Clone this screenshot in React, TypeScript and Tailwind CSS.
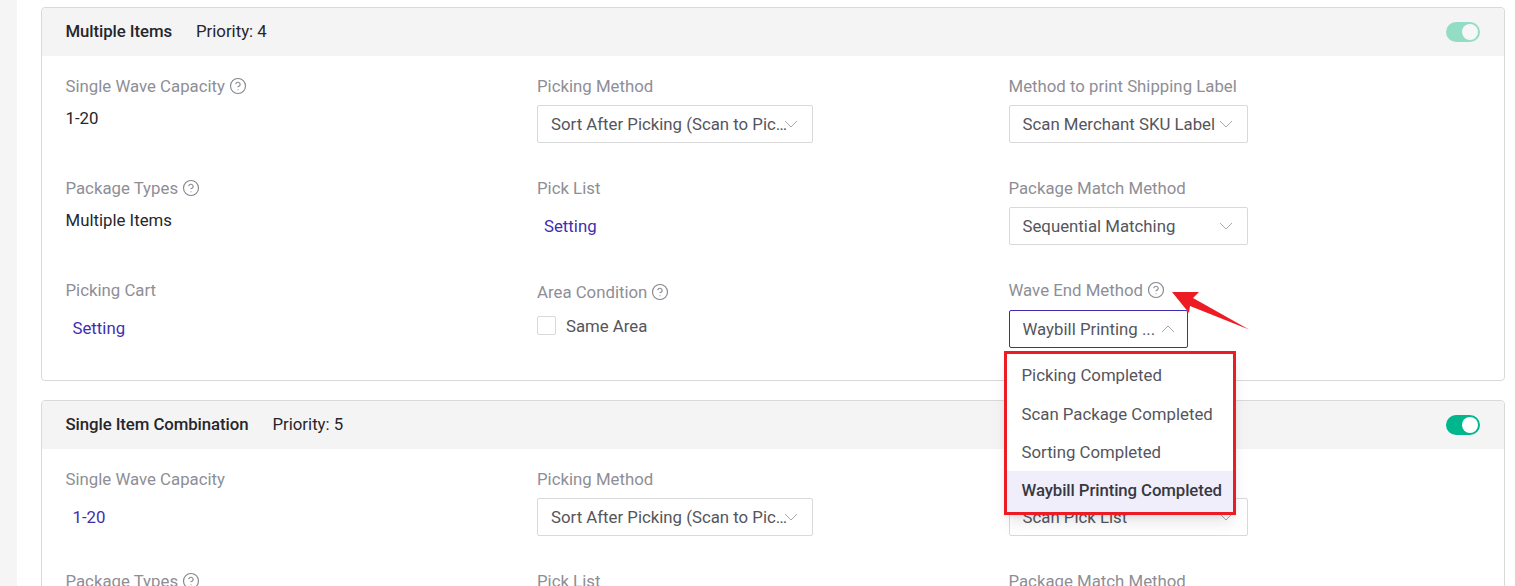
import React from 'react';
import { CircleHelp } from 'lucide-react';

const Chevron = ({ up = false }: { up?: boolean }) => (
  <svg width="14" height="8" viewBox="0 0 14 8" fill="none" className="shrink-0 text-[#a9a9b0]">
    <path d={up ? 'M1 7l6-6 6 6' : 'M1 1l6 6 6-6'} stroke="currentColor" strokeWidth="1" />
  </svg>
);

const Label = ({ text, help = false }: { text: string; help?: boolean }) => (
  <div className="flex h-[22px] items-center gap-[4px] text-[#8e8e96]">
    <span>{text}</span>
    {help && <CircleHelp size={18} strokeWidth={1.5} className="text-[#85858d]" />}
  </div>
);

const Select = ({
  value,
  width,
  open = false,
  textClass = '',
}: {
  value: string;
  width: string;
  open?: boolean;
  textClass?: string;
}) => (
  <div
    className={`flex h-[38px] items-center justify-between rounded-[2px] border bg-white pl-[13px] text-[#55555c] ${width} ${
      open ? 'border-[#3f2fb0] pr-[12px]' : 'border-[#d9d9d9] pr-[14px]'
    }`}
  >
    <span className={`min-w-0 truncate ${textClass}`}>{value}</span>
    <Chevron up={open} />
  </div>
);

const LinkValue = ({ text }: { text: string }) => (
  <div className="flex h-[38px] items-center px-[7px] text-[#3f2fb0]">{text}</div>
);

const Toggle = ({ dim = false }: { dim?: boolean }) => (
  <div
    className={`flex h-[20px] w-[34px] items-center justify-end rounded-full pr-[2px] ${
      dim ? 'bg-[#93dcc6]' : 'bg-[#00b68c]'
    }`}
  >
    <div className={`size-[16px] rounded-full ${dim ? 'bg-[#f7f7f7]' : 'bg-white'}`} />
  </div>
);

const Header = ({ title, priority, dim }: { title: string; priority: number; dim?: boolean }) => (
  <div className="flex h-[48px] items-center justify-between rounded-t-[4px] bg-[#f4f4f4] pl-[23.5px] pr-[24px]">
    <div className="flex items-center gap-[24px] pb-[2px] text-[#26262b]">
      <span className="font-medium tracking-[-0.08px]">{title}</span>
      <span>Priority: {priority}</span>
    </div>
    <Toggle dim={dim} />
  </div>
);

const options = ['Picking Completed', 'Scan Package Completed', 'Sorting Completed'];

const WaveDropdown = () => (
  <div className="absolute left-[-5px] top-[41px] z-10 w-[232px] border-[3px] border-[#ed1c24] bg-white pt-[2px] text-[#55555c] shadow-lg">
    {options.map((o) => (
      <div key={o} className="flex h-[38.4px] items-center px-[15px] whitespace-nowrap">
        {o}
      </div>
    ))}
    <div className="flex h-[41px] items-center bg-[#f0eefb] pb-[3px] pl-[15px] font-medium tracking-[-0.1px] whitespace-nowrap text-[#38383f]">
      Waybill Printing Completed
    </div>
  </div>
);

const pickText = 'w-[236px] shrink-0 -mr-[3px]';

export default function App() {
  return (
    <div className="relative h-screen overflow-hidden bg-white pl-[17px] font-['Roboto',sans-serif] text-[16.8px] leading-[22px]">
      <div className="absolute inset-y-0 left-0 w-[17px] bg-[#f5f5f5]" />

      <div className="flex w-[1488px] flex-col gap-[19px] pl-[24px] pt-[7px]">
        <section className="rounded-[4px] border border-[#d9d9d9]">
          <Header title="Multiple Items" priority={4} dim />
          <div className="grid grid-cols-3 gap-y-[34px] pb-[32px] pl-[23.5px] pr-[24px] pt-[19px]">
            <div>
              <Label text="Single Wave Capacity" help />
              <div className="mt-[10px] text-[#26262b]">1-20</div>
            </div>
            <div>
              <Label text="Picking Method" />
              <div className="mt-[8px]">
                <Select value="Sort After Picking (Scan to Picking)" width="w-[276px]" textClass={pickText} />
              </div>
            </div>
            <div>
              <Label text="Method to print Shipping Label" />
              <div className="mt-[8px]">
                <Select value="Scan Merchant SKU Label" width="w-[239px]" />
              </div>
            </div>

            <div>
              <Label text="Package Types" help />
              <div className="mt-[10px] text-[#26262b]">Multiple Items</div>
            </div>
            <div>
              <Label text="Pick List" />
              <div className="mt-[8px]">
                <LinkValue text="Setting" />
              </div>
            </div>
            <div>
              <Label text="Package Match Method" />
              <div className="mt-[8px]">
                <Select value="Sequential Matching" width="w-[239px]" />
              </div>
            </div>

            <div>
              <Label text="Picking Cart" />
              <div className="mt-[8px]">
                <LinkValue text="Setting" />
              </div>
            </div>
            <div className="pt-[2px]">
              <Label text="Area Condition" help />
              <div className="mt-[13px] flex h-[19px] items-center gap-[10px] text-[#55555c]">
                <span className="size-[19px] rounded-[2px] border border-[#d9d9d9]" />
                <span>Same Area</span>
              </div>
            </div>
            <div className="relative">
              <Label text="Wave End Method" help />
              <div className="mt-[9px]">
                <Select value="Waybill Printing ..." width="w-[179px]" open />
              </div>
              <div className="absolute left-0 top-[31px] h-0 w-0">
                <WaveDropdown />
              </div>
            </div>
          </div>
        </section>

        <section className="rounded-[4px] border border-[#d9d9d9]">
          <Header title="Single Item Combination" priority={5} />
          <div className="grid grid-cols-3 gap-y-[34px] pb-[32px] pl-[23.5px] pr-[24px] pt-[19px]">
            <div>
              <Label text="Single Wave Capacity" />
              <div className="mt-[8px]">
                <LinkValue text="1-20" />
              </div>
            </div>
            <div>
              <Label text="Picking Method" />
              <div className="mt-[8px]">
                <Select value="Sort After Picking (Scan to Picking)" width="w-[276px]" textClass={pickText} />
              </div>
            </div>
            <div>
              <Label text="Method to print Shipping Label" />
              <div className="mt-[8px]">
                <Select value="Scan Pick List" width="w-[239px]" />
              </div>
            </div>
            <Label text="Package Types" help />
            <Label text="Pick List" />
            <Label text="Package Match Method" />
          </div>
        </section>
      </div>

      <svg width="80" height="42" viewBox="0 0 80 42" className="absolute left-[1171px] top-[290px] z-20">
        <polygon points="1,2 28,2 22,8 78,39.5 19,16 18,23" fill="#ed1c24" />
      </svg>
    </div>
  );
}
